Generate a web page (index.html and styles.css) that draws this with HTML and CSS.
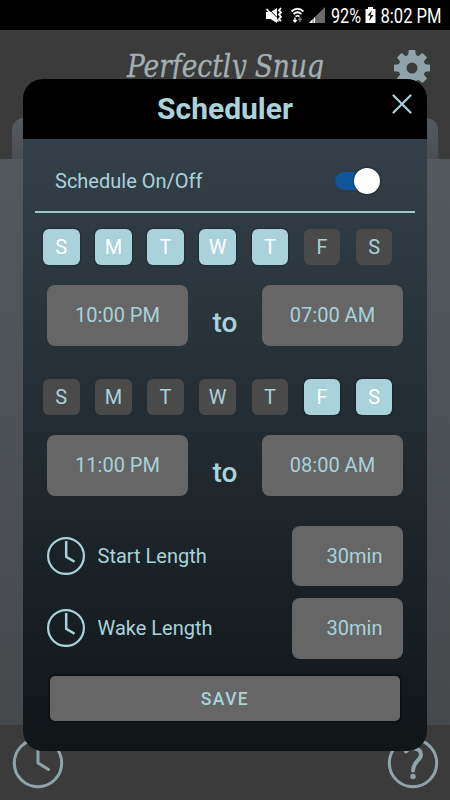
FILE: index.html
```html
<!DOCTYPE html>
<html lang="en">
<head>
<meta charset="utf-8">
<title>Scheduler</title>
<link rel="stylesheet" href="styles.css">
</head>
<body>
<div class="screen">
  <div class="status">
    <svg width="450" height="30" viewBox="0 0 450 30">
      <path d="M266 12h4.500l6.500-4v15l-6.500-4H266z" fill="#fff"/>
      <path d="M268 8l9 9.500" stroke="#000" stroke-width="1"/>
      <path d="M266.500 9l12 12.500" stroke="#fff" stroke-width="1.800"/>
      <path d="M281 8l-2 2.200 2 2.200-2 2.200 2 2.200-2 2.200 2 2.200" fill="none" stroke="#fff" stroke-width="1.800"/>
      <g fill="none" stroke="#fff" stroke-width="1.700">
        <path d="M291.500 11.500q6-5.500 12 0M293.500 14q4-3.500 8 0M295.500 16.500q2-1.500 4 0"/>
      </g>
      <path d="M295 17.500v4M293.300 20l1.700 2 1.700-2" fill="none" stroke="#fff" stroke-width="1.400"/>
      <path d="M300 22v-4M298.500 20l1.500-2 1.500 2" fill="none" stroke="#777" stroke-width="1.400"/>
      <path d="M325 7v16h-16z" fill="#6b6b6b"/>
      <path d="M315 17v6h-6z" fill="#fff"/>
      <path d="M313 17v6" stroke="#000" stroke-width=".6"/>
      <text class="status-text" x="331" y="22.500" textLength="30" lengthAdjust="spacingAndGlyphs">92%</text>
      <path d="M368 7h5v2h2.500v14h-10V9h2.500z" fill="#fff"/>
      <path d="M372 10.500l-4.500 5h3l-1.500 5.500 4.500-6h-3z" fill="#000"/>
      <text class="status-text" x="380.500" y="22.500" textLength="61" lengthAdjust="spacingAndGlyphs">8:02 PM</text>
    </svg>
  </div>
  <header class="app-header">
    <div class="brand-row">
      <svg class="brand" width="220" height="50" viewBox="0 0 220 50"><text x="1" y="32" textLength="197" lengthAdjust="spacingAndGlyphs">Perfectly Snug</text></svg>
      <svg class="gear" width="38" height="38" viewBox="-19 -19 38 38">
        <g fill="#8fa4aa">
          <circle r="13.500"/>
          <path d="M-4-12l.8-6h6.400l.8 6z"/>
          <path d="M-4-12l.8-6h6.400l.8 6z" transform="rotate(45)"/>
          <path d="M-4-12l.8-6h6.400l.8 6z" transform="rotate(90)"/>
          <path d="M-4-12l.8-6h6.400l.8 6z" transform="rotate(135)"/>
          <path d="M-4-12l.8-6h6.400l.8 6z" transform="rotate(180)"/>
          <path d="M-4-12l.8-6h6.400l.8 6z" transform="rotate(225)"/>
          <path d="M-4-12l.8-6h6.400l.8 6z" transform="rotate(270)"/>
          <path d="M-4-12l.8-6h6.400l.8 6z" transform="rotate(315)"/>
        </g>
        <circle r="5.500" fill="#3b3b3b"/>
      </svg>
    </div>
    <div class="tab"></div>
  </header>
  <main class="backdrop"></main>
  <footer class="app-footer">
    <svg width="52" height="52" viewBox="-26 -26 52 52">
      <g fill="none" stroke="#8fa4aa" stroke-width="3" stroke-linecap="round" stroke-linejoin="round">
        <circle r="23.700"/><path d="M0-19V0l10.500 6.500"/>
      </g>
    </svg>
    <svg width="52" height="52" viewBox="-26 -26 52 52">
      <g fill="none" stroke="#8fa4aa" stroke-width="3">
        <circle r="23.700"/><path d="M-7-11.500C-4-16.500 8-15.500 8-8.500C8-3 0-1 0 7.500" stroke-width="4" stroke-linecap="round"/>
      </g>
      <circle cy="13.500" r="2.700" fill="#8fa4aa"/>
    </svg>
  </footer>

  <section class="modal">
    <div class="modal-head">
      <h1>Scheduler</h1>
      <svg class="close" width="20" height="20" viewBox="0 0 20 20"><path d="M1.500 1.500l17 17M18.500 1.500l-17 17" stroke="#a9d2da" stroke-width="2.200" stroke-linecap="round"/></svg>
    </div>
    <div class="toggle-row">
      <span class="label">Schedule On/Off</span>
      <span class="switch"><span class="knob"></span></span>
    </div>
    <div class="days">
      <span class="day on">S</span><span class="day on">M</span><span class="day on">T</span><span class="day on">W</span><span class="day on">T</span><span class="day">F</span><span class="day">S</span>
    </div>
    <div class="times">
      <span class="field">10:00 PM</span><span class="to">to</span><span class="field">07:00 AM</span>
    </div>
    <div class="days second">
      <span class="day">S</span><span class="day">M</span><span class="day">T</span><span class="day">W</span><span class="day">T</span><span class="day on">F</span><span class="day on">S</span>
    </div>
    <div class="times">
      <span class="field">11:00 PM</span><span class="to">to</span><span class="field">08:00 AM</span>
    </div>
    <div class="lengths">
      <div class="length-row">
        <svg class="clock" width="38" height="38" viewBox="-19 -19 38 38"><g fill="none" stroke="#a9d2da" stroke-width="2.200"><circle r="17.900"/><path d="M.2-15V.8l8.300 5" stroke-width="2.500"/></g></svg>
        <span class="label">Start Length</span><span class="field short">30min</span>
      </div>
      <div class="length-row">
        <svg class="clock" width="38" height="38" viewBox="-19 -19 38 38"><g fill="none" stroke="#a9d2da" stroke-width="2.200"><circle r="17.900"/><path d="M.2-15V.8l8.300 5" stroke-width="2.500"/></g></svg>
        <span class="label">Wake Length</span><span class="field short">30min</span>
      </div>
    </div>
    <button class="save">SAVE</button>
  </section>
</div>
</body>
</html>
```
FILE: styles.css
```css
* { box-sizing: border-box; }
body { margin: 0; background: #3b3b3b; font-family: Roboto, sans-serif; }
.screen { position: relative; width: 450px; height: 800px; overflow: hidden; display: flex; flex-direction: column; }
.status { height: 30px; background: #000; }
.status svg { display: block; overflow: visible; }
.status-text { font: 400 20px Roboto, sans-serif; fill: #fff; }
.app-header { height: 129px; background: #3b3b3b; display: flex; flex-direction: column; }
.brand-row { height: 88px; display: grid; grid-template-columns: 126px 1fr 38px; padding-right: 19px; }
.brand { grid-column: 2; margin-top: 15px; font: italic 31px "DejaVu Serif Condensed", "DejaVu Serif", serif; fill: #a3afb2; stroke: #a3afb2; stroke-width: .3px; }
.gear { grid-column: 3; margin-top: 19px; }
.tab { height: 41px; margin: 0 12px; border-radius: 12px 12px 0 0; background: linear-gradient(#555a60, #4a4e53); }
.backdrop { height: 566px; background: linear-gradient(#54595f, #45494c); }
.app-footer { flex: 1; background: #3b3b3b; display: flex; justify-content: space-between; padding: 12px 11px 0 11.5px; }
.modal { position: absolute; left: 23px; top: 79px; width: 404px; height: 672px; border-radius: 20px; overflow: hidden; background: linear-gradient(#344049 60px, #101518); display: flex; flex-direction: column; color: #a9d2da; }
.modal-head { height: 60px; flex: none; background: #000; display: grid; grid-template-columns: 60px 1fr 60px; }
h1 { grid-column: 2; margin: 0; font: 700 30px/60px Roboto, sans-serif; text-align: center; }
.close { margin: 15px 0 0 24.500px; }
.toggle-row { height: 74px; flex: none; margin: 0 12px; padding: 11px 35px 0 20px; border-bottom: 2px solid #a0c7cf; display: flex; align-items: center; justify-content: space-between; }
.label { font-size: 20px; }
.switch { width: 45px; height: 18px; border-radius: 9px; background: #10549a; display: flex; align-items: center; justify-content: flex-end; }
.knob { width: 26px; height: 26px; flex: none; border-radius: 50%; background: #fff; box-shadow: 0 0 2px #000; }
.days { display: flex; justify-content: space-between; margin: 15.500px 34.500px 0 20px; flex: none; }
.day { width: 36.500px; height: 36.500px; border-radius: 6px; background: #4a4a4a; font-size: 20px; line-height: 36.500px; text-align: center; }
.day.on { background: #a9d2da; color: #fff; box-shadow: 0 0 2px #0b1014; }
.times { display: flex; justify-content: space-between; margin: 20px 24px 0; flex: none; }
.field { width: 141px; height: 60.500px; border-radius: 8px; background: #666; font-size: 20px; line-height: 60px; text-align: center; }
.to { font-size: 28px; font-weight: 500; line-height: 75px; height: 60px; }
.days.second { margin-top: 33px; }
.lengths { display: flex; flex-direction: column; gap: 12px; margin: 30px 24px 0; flex: none; }
.length-row { display: flex; align-items: center; }
.length-row .label { margin-left: 12.500px; }
.short { width: 111px; margin-left: auto; text-align: right; padding-right: 20.500px; }
.save { flex: none; height: 45.500px; margin: 17px 27px 0; padding: 1px 0 0; border: 0; border-radius: 5px; background: #666; color: #a9d2da; font: 500 17.500px/45px Roboto, sans-serif; letter-spacing: 1.400px; box-shadow: 0 0 3px #000; }
```
